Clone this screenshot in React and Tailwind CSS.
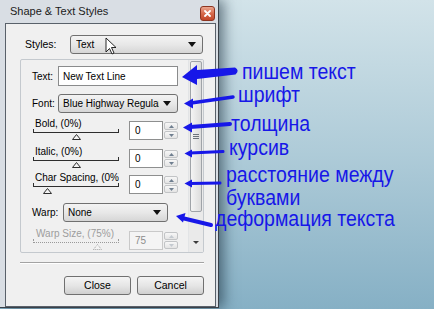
const UI = "font-['Liberation_Sans',Arial,sans-serif]";

function Combo({ text, className }) {
  return (
    <div
      className={`flex items-center rounded-[3px] border border-[#707070] bg-linear-to-b from-[#f3f3f3] via-[#e8e8e8] to-[#d6d6d6] pr-[6px] text-[10px] text-black ${className}`}
    >
      <span className="mr-[4px] min-w-0 flex-1 overflow-hidden whitespace-nowrap">{text}</span>
      <svg width="8" height="5" viewBox="0 0 8 5" className="shrink-0">
        <path d="M0 0H8L4 5Z" fill="#111" />
      </svg>
    </div>
  );
}

function SpinButton({ up, disabled }) {
  return (
    <div className="flex h-[8px] items-center justify-center rounded-[2px] border border-[#c2c4c6] bg-linear-to-b from-[#f7f7f7] to-[#e4e4e4]">
      <svg width="5" height="3" viewBox="0 0 5 3">
        <path d={up ? "M0 3L2.5 0L5 3Z" : "M0 0H5L2.5 3Z"} fill={disabled ? "#c4cad0" : "#6f7f90"} />
      </svg>
    </div>
  );
}

function Spinner({ value, disabled }) {
  return (
    <div className="flex h-[19px] w-[49px] shrink-0">
      <div
        className={
          disabled
            ? "flex w-[34px] items-center border border-[#c9c9c9] bg-[#f4f4f4] pl-[5px] text-[10px] text-[#8c8c8c]"
            : "flex w-[34px] items-center border border-[#8e8f8f] bg-white pl-[5px] text-[10px] text-black"
        }
      >
        {value}
      </div>
      <div className="flex w-[15px] flex-col justify-between py-[1px] pl-[1px]">
        <SpinButton up disabled={disabled} />
        <SpinButton disabled={disabled} />
      </div>
    </div>
  );
}

function Slider({ label, thumb, disabled }) {
  return (
    <div className="ml-[12px] flex w-[86px] shrink-0 flex-col">
      <span
        className={
          disabled
            ? "-mt-[3px] overflow-hidden whitespace-nowrap pl-[3px] text-[10px] leading-[11px] text-[#9d9d9d]"
            : "-mt-[3px] overflow-hidden whitespace-nowrap pl-[2px] text-[10px] leading-[11px] text-black"
        }
      >
        {label}
      </span>
      <div
        className={
          disabled
            ? "h-[4px] border-x border-b border-dotted border-[#9a9a9a]"
            : "h-[4px] border-x border-b border-[#2e2e2e]"
        }
      />
      <svg width="9" height="6" viewBox="0 0 9 6" className="mt-[1px]" style={{ marginLeft: thumb }}>
        <path
          d="M0.5 5.5L4.5 0.5L8.5 5.5Z"
          fill="#f4f4f4"
          stroke={disabled ? "#a0a0a0" : "#2e2e2e"}
          strokeDasharray={disabled ? "1 1" : undefined}
        />
      </svg>
    </div>
  );
}

function Dialog() {
  return (
    <div className="flex h-[308px] w-[219px] shrink-0 flex-col border-r border-b border-[#3a4048] bg-[#d9dee4] pr-[2px] pl-[5px] shadow-[5px_0_12px_rgba(20,40,55,0.55)]">
      <div className="flex h-[23px] shrink-0 items-start justify-between pl-[5px]">
        <span className="mt-[5px] text-[11px] leading-[13px] text-[#1b1b1b]">Shape &amp; Text Styles</span>
        <div className="mt-[6px] mr-[1px] flex h-[15px] w-[15px] items-center justify-center rounded-[3px] border border-[#8d3420] bg-linear-to-b from-[#eba58f] via-[#d66a4c] to-[#c24528]">
          <svg width="7" height="7" viewBox="0 0 7 7">
            <path d="M1 1L6 6M6 1L1 6" stroke="#fff" strokeWidth="1.8" strokeLinecap="round" />
          </svg>
        </div>
      </div>

      <div className="relative flex flex-1 flex-col border border-[#59616a] bg-[#f0f0f0] pt-[11px] pr-[11px] pl-[14px]">
        <div className="flex h-[19px] items-center">
          <span className="w-[50px] pl-[5px] text-[10.5px] text-black">Styles:</span>
          <Combo text="Text" className="h-[19px] w-[133px] pl-[5px]" />
        </div>

        <div className="mt-[5px] flex h-[194px] rounded-[2px] border border-[#c4c9ce]">
          <div className="flex flex-1 flex-col">
            <div className="mt-[6px] flex h-[20px] items-center">
              <span className="w-[37px] pl-[11px] text-[10px]">Text:</span>
              <div className="flex h-[20px] w-[120px] items-center border border-[#8a8b8c] bg-white pl-[4px] text-[10px]">
                New Text Line
              </div>
            </div>

            <div className="mt-[8px] flex h-[19px] items-center">
              <span className="w-[37px] pl-[11px] text-[10px]">Font:</span>
              <Combo text="Blue Highway Regular" className="h-[19px] w-[120px] pl-[4px]" />
            </div>

            <div className="mt-[8px] flex h-[19px] items-start">
              <Slider label="Bold, (0%)" thumb="39px" />
              <div className="ml-[10px]">
                <Spinner value="0" />
              </div>
            </div>

            <div className="mt-[9px] flex h-[19px] items-start">
              <Slider label="Italic, (0%)" thumb="39px" />
              <div className="ml-[10px]">
                <Spinner value="0" />
              </div>
            </div>

            <div className="mt-[7px] flex h-[19px] items-start">
              <Slider label="Char Spacing, (0%)" thumb="10px" />
              <div className="ml-[10px]">
                <Spinner value="0" />
              </div>
            </div>

            <div className="mt-[9px] flex h-[19px] items-center">
              <span className="w-[42px] pl-[11px] text-[10px]">Warp:</span>
              <Combo text="None" className="h-[19px] w-[105px] pl-[4px]" />
            </div>

            <div className="mt-[9px] flex h-[19px] items-start">
              <Slider label="Warp Size, (75%)" thumb="60px" disabled />
              <div className="ml-[10px]">
                <Spinner value="75" disabled />
              </div>
            </div>
          </div>

          <div className="flex w-[15px] flex-col border-l border-[#e2e4e6] bg-[#eaeaea] px-[1px]">
            <div className="mt-[1px] flex h-[151px] items-center justify-center rounded-[2px] border border-[#9fa3a8] bg-linear-to-r from-[#f4f4f4] to-[#dcdcdc]">
              <div className="flex w-[6px] flex-col gap-[1px]">
                <div className="h-px bg-[#6d747b]" />
                <div className="h-px bg-[#6d747b]" />
                <div className="h-px bg-[#6d747b]" />
              </div>
            </div>
            <div className="mt-auto mb-[5px] flex h-[10px] items-center justify-center">
              <svg width="6" height="3" viewBox="0 0 6 3">
                <path d="M0 0H6L3 3Z" fill="#3b3b3b" />
              </svg>
            </div>
          </div>
        </div>

        <div className="mt-[9px] h-[2px] border-t border-b border-t-[#a3a3a3] border-b-white" />

        <div className="mt-[12px] flex justify-end gap-[6px]">
          <div className="flex h-[19px] w-[67px] items-center justify-center rounded-[3px] border border-[#707070] bg-linear-to-b from-[#f4f4f4] via-[#e6e6e6] to-[#d0d0d0] text-[10.5px]">
            Close
          </div>
          <div className="flex h-[19px] w-[67px] items-center justify-center rounded-[3px] border border-[#707070] bg-linear-to-b from-[#f4f4f4] via-[#e6e6e6] to-[#d0d0d0] text-[10.5px]">
            Cancel
          </div>
        </div>
      </div>
    </div>
  );
}

function Annotations() {
  const note = "absolute whitespace-nowrap text-[19.5px] leading-none text-[#1717e8] scale-y-115";
  return (
    <div className="pointer-events-none absolute inset-0">
      <svg width="434" height="309" viewBox="0 0 434 309" className="absolute inset-0">
        <path d="M106 38V52L109.5 48.5L112 54L114 53L111.5 47.5H116Z" fill="#fff" stroke="#111" strokeWidth="0.9" strokeLinejoin="round" />
        <g fill="#1717e8" stroke="#1717e8" strokeLinecap="round">
          <path d="M182 77L197 65V70L235 67.5Q240 70.5 235.5 74.5L197 79V85Z" stroke="none" />
          <path d="M233 97L191 103" strokeWidth="3.5" />
          <path d="M184 103.5L193 98.5L193 108.5Z" stroke="none" />
          <path d="M230 124L190 127" strokeWidth="4" />
          <path d="M183 127.5L192 122.5L192 132.5Z" stroke="none" />
          <path d="M223 151.5L190 153" strokeWidth="3" />
          <path d="M184.5 153.5L192 149.5L192 157.5Z" stroke="none" />
          <path d="M220 183L190 183.5" strokeWidth="3" />
          <path d="M184.5 183.5L192 179.5L192 187.5Z" stroke="none" />
          <path d="M211 225L182 218" strokeWidth="4" />
          <path d="M176 216L185.5 213L183 222.5Z" stroke="none" />
        </g>
      </svg>
      <span className={`${note} top-[62px] left-[242px]`}>пишем текст</span>
      <span className={`${note} top-[85px] left-[238px]`}>шрифт</span>
      <span className={`${note} top-[114px] left-[231px]`}>толщина</span>
      <span className={`${note} top-[138px] left-[229px]`}>курсив</span>
      <span className={`${note} top-[165px] left-[226px]`}>расстояние между</span>
      <span className={`${note} top-[188px] left-[226px]`}>буквами</span>
      <span className={`${note} top-[209px] left-[215px]`}>деформация текста</span>
    </div>
  );
}

export default function App() {
  return (
    <div className={`relative h-[309px] w-[434px] overflow-hidden bg-linear-to-b from-[#d2e3e9] via-[#aecbd8] to-[#86b0c5] ${UI}`}>
      <div className="flex h-full">
        <Dialog />
      </div>
      <Annotations />
    </div>
  );
}
